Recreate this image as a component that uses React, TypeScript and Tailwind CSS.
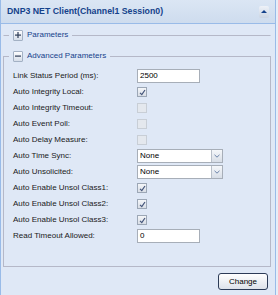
import React from "react";

type Row =
  | { label: string; kind: "input"; value: string }
  | { label: string; kind: "check"; checked: boolean }
  | { label: string; kind: "select"; value: string };

const rows: Row[] = [
  { label: "Link Status Period (ms):", kind: "input", value: "2500" },
  { label: "Auto Integrity Local:", kind: "check", checked: true },
  { label: "Auto Integrity Timeout:", kind: "check", checked: false },
  { label: "Auto Event Poll:", kind: "check", checked: false },
  { label: "Auto Delay Measure:", kind: "check", checked: false },
  { label: "Auto Time Sync:", kind: "select", value: "None" },
  { label: "Auto Unsolicited:", kind: "select", value: "None" },
  { label: "Auto Enable Unsol Class1:", kind: "check", checked: true },
  { label: "Auto Enable Unsol Class2:", kind: "check", checked: true },
  { label: "Auto Enable Unsol Class3:", kind: "check", checked: true },
  { label: "Read Timeout Allowed:", kind: "input", value: "0" },
];

function ToggleBox({ plus }: { plus: boolean }) {
  return (
    <span className="w-[10px] h-[11px] border border-[#a3b1c4] rounded-[1px] bg-linear-to-b from-[#fdfdfe] to-[#d6dee9] flex items-center justify-center shrink-0">
      <svg width="6" height="6" viewBox="0 0 6 6">
        <rect x="0" y="2.5" width="6" height="1.2" fill="#2f3e58" />
        {plus && <rect x="2.4" y="0" width="1.2" height="6" fill="#2f3e58" />}
      </svg>
    </span>
  );
}

function Check({ checked }: { checked: boolean }) {
  if (checked) {
    return (
      <span className="w-[10px] h-[10px] border border-[#9ca7b6] bg-linear-to-b from-[#f4f6f9] to-[#d9dee6] flex items-center justify-center">
        <svg width="7" height="7" viewBox="0 0 7 7">
          <path d="M1 3.8 L2.8 5.6 L6 1" fill="none" stroke="#44557a" strokeWidth="1.2" />
        </svg>
      </span>
    );
  }
  return <span className="w-[10px] h-[10px] border border-[#c8ced6] bg-[#e4e8ee]" />;
}

export default function App() {
  return (
    <div className="w-[278px] h-[295px] bg-[#e6edf7] overflow-hidden font-['Liberation_Sans',Arial,sans-serif]">
      <div className="w-[276px] h-full border-x border-[#99bbe8] bg-[#dfe8f6] flex flex-col">
        <div className="h-[24px] shrink-0 border-b border-[#99bbe8] bg-linear-to-b from-[#dbe6f4] to-[#cedcee] flex items-center justify-between pl-[6px] pr-[6px]">
          <span className="text-[8.75px] font-bold text-[#15428b] leading-none">
            DNP3 NET Client(Channel1 Session0)
          </span>
          <span className="w-[10px] h-[12px] rounded-[2px] bg-linear-to-b from-[#eef2f8] to-[#cbd5e3] flex items-center justify-center">
            <span className="w-0 h-0 border-x-[3px] border-x-transparent border-b-[3px] border-b-[#15428b]" />
          </span>
        </div>

        <div className="pl-[2px] pr-[4px] flex flex-col">
          <fieldset className="mt-[5px] border border-transparent border-t-[#b5b8c8] px-[5px]">
            <legend className="px-[4px] h-[12px] flex items-center gap-[4px]">
              <ToggleBox plus />
              <span className="text-[8px] leading-none text-[#15428b]">Parameters</span>
            </legend>
          </fieldset>

          <fieldset className="mt-[8px] border border-[#b5b8c8] px-[5px] pt-[6px] pb-[22px]">
            <legend className="px-[4px] h-[12px] flex items-center gap-[4px]">
              <ToggleBox plus={false} />
              <span className="text-[8px] leading-none text-[#15428b]">Advanced Parameters</span>
            </legend>
            {rows.map((r) => (
              <div key={r.label} className="h-[16px] flex items-center pl-[4px]">
                <span className="w-[124px] shrink-0 text-[8px] leading-none text-[#1a1a1a]">
                  {r.label}
                </span>
                {r.kind === "input" && (
                  <div className="w-[63px] h-[14px] border border-[#a7aeb8] bg-white flex items-center px-[2px] text-[8px] leading-none text-black">
                    {r.value}
                  </div>
                )}
                {r.kind === "check" && <Check checked={r.checked} />}
                {r.kind === "select" && (
                  <div className="w-[86px] h-[14px] border border-[#a7aeb8] bg-white flex">
                    <span className="flex-1 flex items-center px-[2px] text-[8px] leading-none text-black">
                      {r.value}
                    </span>
                    <span className="w-[11px] border-l border-[#b9c0ca] bg-linear-to-b from-[#f5f7fa] to-[#d8dee7] flex items-center justify-center">
                      <svg width="6" height="4" viewBox="0 0 6 4">
                        <path d="M0.5 0.8 L3 3.2 L5.5 0.8" fill="none" stroke="#6b82a8" strokeWidth="1" />
                      </svg>
                    </span>
                  </div>
                )}
              </div>
            ))}
          </fieldset>

          <div className="flex justify-end pr-[3px] mt-[6px]">
            <button className="w-[50px] h-[17px] rounded-[3px] border border-[#2c3b57] bg-linear-to-b from-white to-[#dde2ea] text-[8px] leading-none text-black flex items-center justify-center">
              Change
            </button>
          </div>
        </div>
      </div>
    </div>
  );
}
